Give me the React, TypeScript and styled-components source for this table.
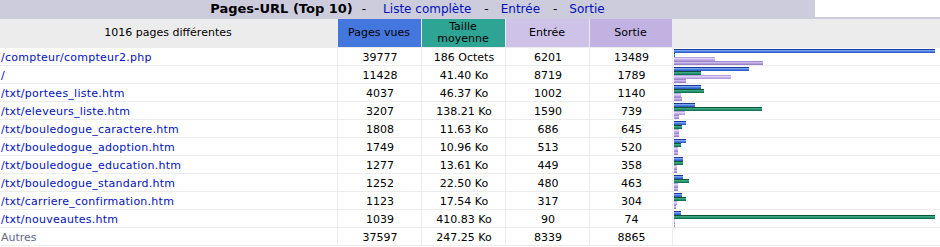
import React from "react";
import styled, { createGlobalStyle } from "styled-components";

const GlobalStyle = createGlobalStyle`
  html, body {
    margin: 0;
    padding: 0;
    background: #ffffff;
  }
  body {
    font: 11px "DejaVu Sans", Verdana, sans-serif;
    color: #000000;
  }
`;

const BAR_MAX = 260;

const Page = styled.div`
  width: 940px;
`;

const TitleRow = styled.div`
  display: flex;
  height: 17px;
`;

const TitleCell = styled.div`
  width: 815px;
  background: #ccccdd;
  display: flex;
  align-items: center;
  justify-content: center;
  font-size: 13px;
  font-weight: bold;
  white-space: nowrap;
`;

const Blank = styled.div`
  flex: 1;
  background: #ffffff;
`;

const TitleLinks = styled.span`
  font-size: 12px;
  font-weight: normal;
  display: flex;
  align-items: center;
`;

const Sep = styled.span<{ $first?: boolean }>`
  margin: ${({ $first }) => ($first ? "0 17px 0 9px" : "0 12px 0 13px")};
`;

const Link = styled.a`
  color: #0011bb;
  text-decoration: none;
`;

const DataGrid = styled.div`
  display: grid;
  grid-template-columns: 337px 83px 83px 83px 82px 1fr;
  grid-auto-rows: 17px;
  grid-template-rows: 28px;
  gap: 1px;
  background: #ececec;
  border-top: 2px solid #ccccdd;
  border-bottom: 1px solid #ececec;
`;

const HeadCell = styled.div<{ $bg: string }>`
  background: ${({ $bg }) => $bg};
  display: flex;
  align-items: center;
  justify-content: center;
  text-align: center;
  line-height: 12px;
  padding: 0 2px 0 1px;
`;

const Cell = styled.div<{ $align?: "left" | "center" }>`
  background: #ffffff;
  display: flex;
  align-items: center;
  justify-content: ${({ $align }) => ($align === "left" ? "flex-start" : "center")};
  padding: 1px 0 0 1px;
  white-space: nowrap;
  overflow: hidden;
`;

const UrlLink = styled(Link)`
  letter-spacing: 0.25px;
`;

const Others = styled.span`
  color: #666688;
`;

const GraphCell = styled.div`
  background: #ffffff;
  padding: 1px 0 0 1px;
  overflow: hidden;
`;

const barColors = {
  p: ["#1b3b98", "#7da3f0", "#4a7ce0", "#3260c6"],
  k: ["#0c5436", "#3faa82", "#279070", "#147456"],
  e: ["#b9a4e2", "#ddd2f5", "#c7b5ec", "#b29cdc"],
  x: ["#9f87cf", "#cbbbeb", "#b29cdc", "#9a82c8"],
};

const Bar = styled.div<{ $kind: keyof typeof barColors }>`
  height: 4px;
  background: ${({ $kind }) => {
    const c = barColors[$kind];
    return `linear-gradient(to bottom, ${c[0]} 0 1px, ${c[1]} 1px 2px, ${c[2]} 2px 3px, ${c[3]} 3px 4px)`;
  }};
`;

type Row = {
  url: string;
  pages: number;
  size: string;
  ko: number;
  entry: number;
  exit: number;
};

const rows: Row[] = [
  { url: "/compteur/compteur2.php", pages: 39777, size: "186 Octets", ko: 0.1816, entry: 6201, exit: 13489 },
  { url: "/", pages: 11428, size: "41.40 Ko", ko: 41.4, entry: 8719, exit: 1789 },
  { url: "/txt/portees_liste.htm", pages: 4037, size: "46.37 Ko", ko: 46.37, entry: 1002, exit: 1140 },
  { url: "/txt/eleveurs_liste.htm", pages: 3207, size: "138.21 Ko", ko: 138.21, entry: 1590, exit: 739 },
  { url: "/txt/bouledogue_caractere.htm", pages: 1808, size: "11.63 Ko", ko: 11.63, entry: 686, exit: 645 },
  { url: "/txt/bouledogue_adoption.htm", pages: 1749, size: "10.96 Ko", ko: 10.96, entry: 513, exit: 520 },
  { url: "/txt/bouledogue_education.htm", pages: 1277, size: "13.61 Ko", ko: 13.61, entry: 449, exit: 358 },
  { url: "/txt/bouledogue_standard.htm", pages: 1252, size: "22.50 Ko", ko: 22.5, entry: 480, exit: 463 },
  { url: "/txt/carriere_confirmation.htm", pages: 1123, size: "17.54 Ko", ko: 17.54, entry: 317, exit: 304 },
  { url: "/txt/nouveautes.htm", pages: 1039, size: "410.83 Ko", ko: 410.83, entry: 90, exit: 74 },
];

const maxPages = Math.max(...rows.map((r) => r.pages));
const maxKo = Math.max(...rows.map((r) => r.ko));
const barWidth = (v: number, max: number) => Math.floor((v / max) * BAR_MAX) + 1;

export default function App() {
  return (
    <Page>
      <GlobalStyle />
      <TitleRow>
        <TitleCell>
          Pages-URL (Top 10)
          <TitleLinks>
            <Sep $first>-</Sep>
            <Link href="#">Liste complète</Link>
            <Sep>-</Sep>
            <Link href="#">Entrée</Link>
            <Sep>-</Sep>
            <Link href="#">Sortie</Link>
          </TitleLinks>
        </TitleCell>
        <Blank />
      </TitleRow>
      <DataGrid>
        <HeadCell $bg="#ececec">1016 pages différentes</HeadCell>
        <HeadCell $bg="#4477dd">Pages vues</HeadCell>
        <HeadCell $bg="#2ea495">
          Taille
          <br />
          moyenne
        </HeadCell>
        <HeadCell $bg="#cec2e8">Entrée</HeadCell>
        <HeadCell $bg="#c1b2e2">Sortie</HeadCell>
        <HeadCell $bg="#ececec" />
        {rows.map((r) => (
          <React.Fragment key={r.url}>
            <Cell $align="left">
              <UrlLink href="#">{r.url}</UrlLink>
            </Cell>
            <Cell>{r.pages}</Cell>
            <Cell>{r.size}</Cell>
            <Cell>{r.entry}</Cell>
            <Cell>{r.exit}</Cell>
            <GraphCell>
              <Bar $kind="p" style={{ width: barWidth(r.pages, maxPages) }} />
              <Bar $kind="k" style={{ width: barWidth(r.ko, maxKo) }} />
              <Bar $kind="e" style={{ width: barWidth(r.entry, maxPages) }} />
              <Bar $kind="x" style={{ width: barWidth(r.exit, maxPages) }} />
            </GraphCell>
          </React.Fragment>
        ))}
        <Cell $align="left">
          <Others>Autres</Others>
        </Cell>
        <Cell>37597</Cell>
        <Cell>247.25 Ko</Cell>
        <Cell>8339</Cell>
        <Cell>8865</Cell>
        <GraphCell />
      </DataGrid>
    </Page>
  );
}
